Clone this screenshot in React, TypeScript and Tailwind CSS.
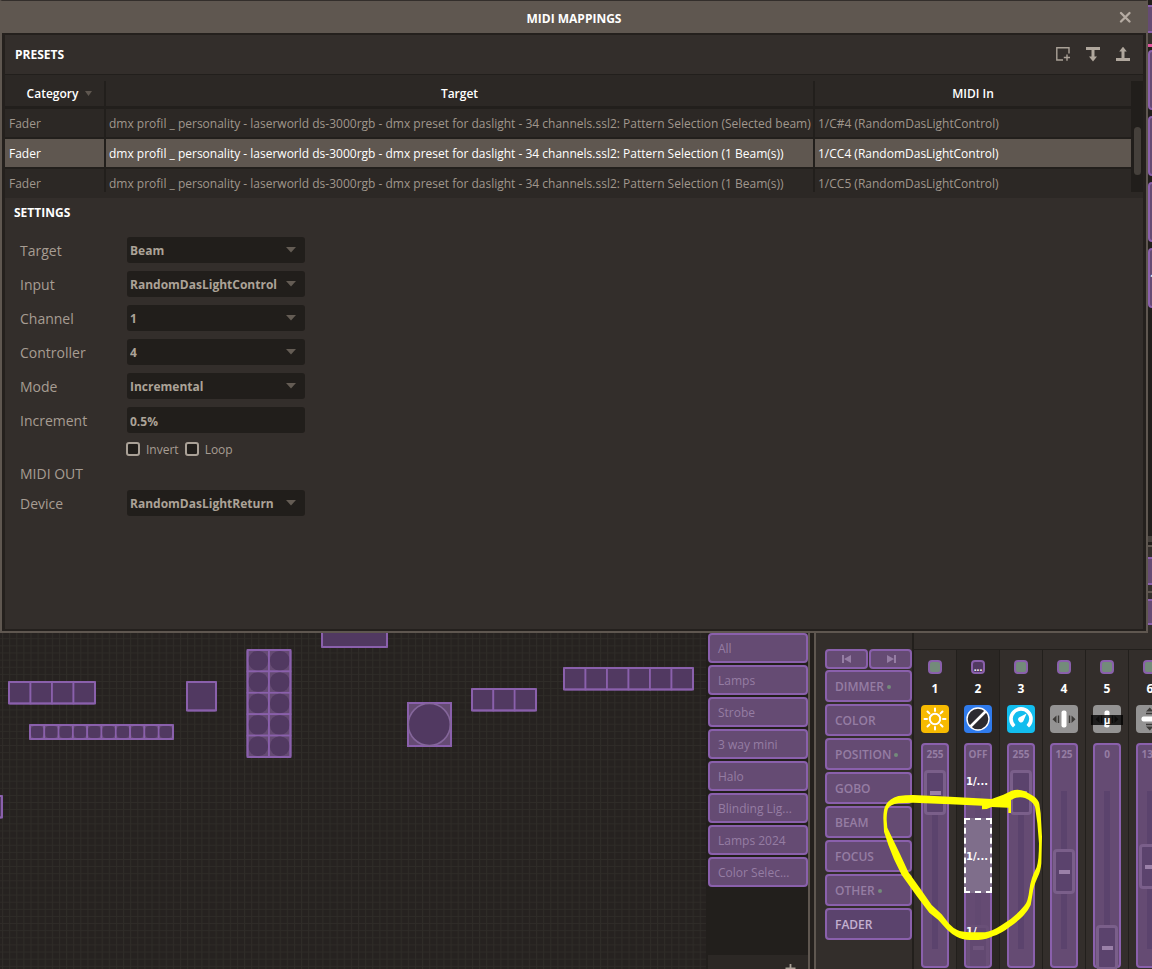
import React, { useState } from "react";
import { clsx } from "clsx";

const presets = [
  { category: "Fader", target: "dmx profil _ personality - laserworld ds-3000rgb - dmx preset for daslight - 34 channels.ssl2: Pattern Selection (Selected beam)", midi: "1/C#4 (RandomDasLightControl)" },
  { category: "Fader", target: "dmx profil _ personality - laserworld ds-3000rgb - dmx preset for daslight - 34 channels.ssl2: Pattern Selection (1 Beam(s))", midi: "1/CC4 (RandomDasLightControl)" },
  { category: "Fader", target: "dmx profil _ personality - laserworld ds-3000rgb - dmx preset for daslight - 34 channels.ssl2: Pattern Selection (1 Beam(s))", midi: "1/CC5 (RandomDasLightControl)" },
];

const groups = ["All", "Lamps", "Strobe", "3 way mini", "Halo", "Blinding Lig...", "Lamps 2024", "Color Selec..."];

const features = [
  { name: "DIMMER", dot: true },
  { name: "COLOR" },
  { name: "POSITION", dot: true },
  { name: "GOBO" },
  { name: "BEAM" },
  { name: "FOCUS" },
  { name: "OTHER", dot: true },
  { name: "FADER", active: true },
];

function Field({ id, label, children }: { id: string; label: string; children: React.ReactNode }) {
  return (
    <div className="flex h-[26px] items-center">
      <label htmlFor={id} className="w-[107px] pt-0.5 text-sm leading-5">{label}</label>
      <div className="relative w-[178px]">{children}</div>
    </div>
  );
}

function SelectField({ id, label, value }: { id: string; label: string; value: string }) {
  return (
    <Field id={id} label={label}>
      <select id={id} className="block h-[26px] w-full appearance-none rounded-[3px] bg-[#211e1b] px-[3px] pt-0.5 text-xs font-bold text-[#aca398] outline-none">
        <option>{value}</option>
      </select>
      <svg className="pointer-events-none absolute top-2.5 right-[9px] h-[6px] w-[10px]" viewBox="0 0 10 6">
        <path d="M0 0h10L5 5.500z" fill="#645c54" />
      </svg>
    </Field>
  );
}

function Check({ label }: { label: string }) {
  return (
    <label className="flex items-center gap-1.5 text-xs">
      <input type="checkbox" className="size-3.5 appearance-none rounded-[3px] border-2 border-[#aaa197] bg-[#211e1b] checked:bg-[#aaa197]" />
      <span className="pt-0.5">{label}</span>
    </label>
  );
}

function Dialog() {
  const [selected, setSelected] = useState(1);
  return (
    <section aria-label="MIDI Mappings" className="flex min-w-0 flex-1 flex-col border-x-2 border-b-2 border-[#5f5750] border-t border-t-[#332e2b]">
      <header className="relative flex h-8 items-center justify-center bg-[#5f5750]">
        <h1 className="pt-[3px] text-xs font-bold text-white">MIDI MAPPINGS</h1>
        <button aria-label="Close" className="absolute right-[15px] size-3">
          <svg viewBox="0 0 12 12" className="size-3"><path d="M2 2l8.500 8.500m0-8.500L2 10.500" stroke="#b5aba2" strokeWidth="2.300" strokeLinecap="round" /></svg>
        </button>
      </header>
      <div className="flex flex-1 flex-col border-x-[3px] border-y-2 border-[#24201d] bg-[#332e2b]">
        <div className="flex h-10 items-center justify-between border-b border-[#221f1c] pr-[13px] pl-2.5">
          <h2 className="text-xs font-bold text-white">PRESETS</h2>
          <div className="flex gap-4">
            <button aria-label="New preset">
              <svg viewBox="0 0 14 15" className="h-[15px] w-3.5" fill="none" stroke="#aaa197" strokeWidth="1.400">
                <path d="M13 6.500V.8H.8V13H7M7.800 10.500h6.200M11 7.500v6.200" />
              </svg>
            </button>
            <button aria-label="Import presets">
              <svg viewBox="0 0 14 15" className="h-[15px] w-3.5" fill="#b0a79d">
                <path d="M0 0h14v3H0zM5.500 3h3V9.500H11L7 14.500 3 9.500h2.500z" />
              </svg>
            </button>
            <button aria-label="Export presets">
              <svg viewBox="0 0 14 15" className="h-[15px] w-3.5" fill="#b0a79d">
                <path d="M0 11h14v3H0zM5.500 11V4.500H3.200L7-.3l3.800 4.800H8.500V11z" />
              </svg>
            </button>
          </div>
        </div>
        <div className="bg-[#2c2825] py-1.5">
          <div className="flex h-[111px] overflow-hidden">
            <table className="min-w-0 flex-1 table-fixed border-separate border-spacing-0 self-start text-xs">
              <colgroup>
                <col className="w-[101px]" />
                <col />
                <col className="w-[316px]" />
              </colgroup>
              <thead className="text-white">
                <tr className="h-7">
                  <th className="border-r-2 border-b-[3px] border-[#221f1c] p-0 font-semibold">
                    <span className="flex items-center justify-center gap-[7px] pl-4 pr-1.5">
                      Category
                      <svg viewBox="0 0 7 5" className="h-[5px] w-[7px]"><path d="M0 0h7L3.500 5z" fill="#5f5750" /></svg>
                    </span>
                  </th>
                  <th className="border-r-2 border-b-[3px] border-[#221f1c] p-0 font-semibold">Target</th>
                  <th className="border-b-[3px] border-[#221f1c] p-0 font-semibold">MIDI In</th>
                </tr>
              </thead>
              <tbody>
                {presets.map((p, i) => (
                  <tr key={i} onClick={() => setSelected(i)} className={clsx("h-[30px]", i === selected ? "bg-[#5f5750] text-white" : "text-[#a0978d]")}>
                    <td className="border-r-2 border-b-2 border-[#221f1c] p-0 pt-0.5 pl-1">{p.category}</td>
                    <td className="truncate border-r-2 border-b-2 border-[#221f1c] p-0 pt-0.5 pl-[3px]">{p.target}</td>
                    <td className="border-b-2 border-[#221f1c] p-0 pt-0.5 pl-[3px]">{p.midi}</td>
                  </tr>
                ))}
              </tbody>
            </table>
            <div className="flex w-3 justify-center bg-[#211e1b] pt-[46px]">
              <div className="h-12 w-[7px] rounded-full bg-[#45403b]" />
            </div>
          </div>
        </div>
        <div className="flex h-[431px] flex-col text-[#a79d93]">
          <h2 className="flex h-7 items-center pt-0.5 pl-[9px] text-xs font-bold text-white">SETTINGS</h2>
          <form className="flex flex-col gap-2 pt-[11px] pl-[15px]">
            <SelectField id="target" label="Target" value="Beam" />
            <SelectField id="input" label="Input" value="RandomDasLightControl" />
            <SelectField id="channel" label="Channel" value="1" />
            <SelectField id="controller" label="Controller" value="4" />
            <SelectField id="mode" label="Mode" value="Incremental" />
            <Field id="increment" label="Increment">
              <input id="increment" defaultValue="0.5%" className="block h-[26px] w-full rounded-[3px] bg-[#211e1b] px-[3px] pt-0.5 text-xs font-bold text-[#aca398] outline-none" />
            </Field>
            <div className="flex h-4 items-center gap-1.5 pl-[106px]">
              <Check label="Invert" />
              <Check label="Loop" />
            </div>
            <div className="-mt-px flex flex-col gap-1.5">
              <h3 className="text-sm leading-5">MIDI OUT</h3>
              <SelectField id="device" label="Device" value="RandomDasLightReturn" />
            </div>
          </form>
        </div>
      </div>
    </section>
  );
}

function EdgeStrip() {
  return (
    <aside className="flex w-1 shrink-0 flex-col overflow-hidden bg-[#211e1b] pt-[5px]">
      <div className="h-7 shrink-0 border-y-2 border-[#8a60ac] bg-[#654b73]" />
      <div className="h-[11px] shrink-0 bg-[#332e2b]" />
      <div className="mb-[3px] h-[3px] shrink-0 bg-[#e0529c]" />
      {["", "", "", "1"].map((t, i) => (
        <button key={i} aria-label="Scene" className="mb-1.5 flex h-[60px] w-8 shrink-0 items-center rounded-[4px] border-2 border-[#8a60ac] bg-[#654b73] text-[10px] font-bold text-white">{t}</button>
      ))}
      <div className="mt-[222px] h-1.5 shrink-0 bg-[#45403b]" />
      <div className="mt-[3px] h-0.5 shrink-0 bg-[#5f5750]" />
      <div className="h-2.5 shrink-0 bg-[#332e2b]" />
      <div className="h-7 shrink-0 border-y-2 border-[#8a60ac] bg-[#654b73]" />
      <div className="h-1.5 shrink-0 bg-[#332e2b]" />
      <div className="h-0.5 shrink-0 bg-[#5f5750]" />
      <div className="h-1.5 shrink-0 bg-[#332e2b]" />
      <div className="h-[26px] shrink-0 border-y-2 border-[#8a60ac] bg-[#654b73]" />
      <div className="flex-1 bg-[#332e2b]" />
    </aside>
  );
}

type CellShape = "square" | "round" | "soft";

function Fixture({ x, y, w, h, cols = 1, rows = 1, shape = "square" }: { x: number; y: number; w: number; h: number; cols?: number; rows?: number; shape?: CellShape }) {
  const cw = (w - 2) / cols;
  const ch = (h - 2) / rows;
  const cells = [];
  for (let r = 0; r < rows; r++) {
    for (let c = 0; c < cols; c++) {
      const cx = x + 1 + c * cw;
      const cy = y + 1 + r * ch;
      cells.push(
        <g key={`${r}-${c}`}>
          <rect x={cx} y={cy} width={cw} height={ch} fill={shape === "square" ? "#513961" : "#654b73"} stroke="#8a60ac" strokeWidth="1.7" />
          {shape === "round" && <rect x={cx + 1} y={cy + 1} width={cw - 2} height={ch - 2} rx={9} fill="#513961" />}
          {shape === "soft" && <rect x={cx + 1} y={cy + 1} width={cw - 2} height={ch - 2} rx={4} fill="#513961" />}
        </g>
      );
    }
  }
  return (
    <g>
      {cells}
      <rect x={x + 1} y={y + 1} width={w - 2} height={h - 2} rx="1" fill="none" stroke="#8a60ac" strokeWidth="2" />
    </g>
  );
}

function Stage() {
  return (
    <div className="min-w-0 flex-1 overflow-hidden bg-[#262220]">
      <svg className="h-full w-full" aria-label="Stage layout">
        <defs>
          <pattern id="grid" x="2" y="5.300" width="7.120" height="7.120" patternUnits="userSpaceOnUse">
            <path d="M.5 0V7.120M0 .5H7.120" stroke="#2f2c28" fill="none" />
          </pattern>
        </defs>
        <rect width="100%" height="100%" fill="url(#grid)" />
        <Fixture x={321} y={-12} w={67} h={27} />
        <Fixture x={8} y={48} w={88} h={23.500} cols={4} />
        <Fixture x={186} y={48} w={31} h={30.500} />
        <Fixture x={29} y={91} w={145} h={16} cols={10} shape="soft" />
        <Fixture x={246.500} y={16} w={45} h={109} cols={2} rows={5} shape="round" />
        <Fixture x={471} y={55} w={66} h={23.500} cols={3} />
        <Fixture x={563} y={34} w={131} h={23.500} cols={6} />
        <Fixture x={-28} y={162} w={31} h={23.500} />
        <rect x="408" y="70" width="43" height="43" fill="#654b73" stroke="#8a60ac" strokeWidth="2" />
        <circle cx="429.300" cy="91.500" r="21" fill="#513961" stroke="#84669a" strokeWidth="1.600" />
      </svg>
    </div>
  );
}

function Groups() {
  return (
    <nav aria-label="Groups" className="flex w-[104px] shrink-0 flex-col border-r-2 border-[#5f5750] bg-[#221f1c] pl-0.5">
      <div className="flex flex-1 flex-col gap-0.5">
        {groups.map((g) => (
          <button key={g} className="h-[30px] shrink-0 rounded-[4px] border-2 border-[#8a60ac] bg-[#654b73] pt-0.5 pl-2 text-left text-xs text-[#957da3]">{g}</button>
        ))}
      </div>
      <div className="flex h-[14px] shrink-0 justify-end overflow-hidden bg-[#2c2825] pt-[9px] pr-3">
        <button aria-label="Add group" className="size-[11px] shrink-0">
          <svg viewBox="0 0 11 11" className="size-[11px]"><path d="M5.500 0v10M.5 4.500h10" stroke="#aaa197" strokeWidth="1.800" /></svg>
        </button>
      </div>
    </nav>
  );
}

function Features() {
  return (
    <nav aria-label="Features" className="flex w-[98px] shrink-0 flex-col gap-0.5 border-r-2 border-[#221f1c] bg-[#332e2b] pt-4 pl-[9px]">
      <div className="-mb-px flex h-5 gap-px">
        <button aria-label="Previous" className="flex flex-1 items-center justify-center rounded-[4px] border-2 border-[#8a60ac] bg-[#654b73]">
          <svg viewBox="0 0 10 8" className="h-2 w-2.5" fill="#957da3"><path d="M0 0h2v8H0zM9 0v8L2 4z" /></svg>
        </button>
        <button aria-label="Next" className="flex flex-1 items-center justify-center rounded-[4px] border-2 border-[#8a60ac] bg-[#654b73]">
          <svg viewBox="0 0 10 8" className="h-2 w-2.5" fill="#957da3"><path d="M8 0h2v8H8zM1 0v8l7-4z" /></svg>
        </button>
      </div>
      {features.map((f) => (
        <button
          key={f.name}
          className={clsx(
            "flex h-8 shrink-0 items-center gap-[3px] rounded-[4px] border-2 border-[#8a60ac] pt-0.5 pl-2 text-xs font-semibold",
            f.active ? "bg-[#5b436d] text-[#c3b0d0]" : "bg-[#654b73] text-[#957da3]"
          )}
        >
          {f.name}
          {f.dot && <span className="size-1 rounded-full bg-[#738b7a]" />}
        </button>
      ))}
    </nav>
  );
}

function Sun() {
  return (
    <svg viewBox="0 0 28 28" className="size-7" fill="none" stroke="#fff" strokeWidth="2" strokeLinecap="round">
      <circle cx="14" cy="14" r="5.200" />
      <path d="M14 3.500V6M14 22v2.500M3.500 14H6M22 14h2.500M6.500 6.500l1.900 1.900M19.600 19.600l1.900 1.900M6.500 21.500l1.900-1.900M19.600 8.400l1.900-1.900" />
    </svg>
  );
}

function Shutter() {
  return (
    <svg viewBox="0 0 28 28" className="size-7">
      <circle cx="14" cy="14" r="11" fill="#2c2b30" stroke="#fff" strokeWidth="1.400" />
      <path d="M6.500 21.500l15-15" stroke="#fff" strokeWidth="2.600" />
    </svg>
  );
}

function Gauge() {
  return (
    <svg viewBox="0 0 28 28" className="size-7" fill="none">
      <path d="M7.200 21.200A10 10 0 1 1 20.800 21.200" stroke="#fff" strokeWidth="3.600" />
      <path d="M19.600 8.400l-3.300 7.900a2.700 2.700 0 1 1-4.400-3.700z" fill="#fff" />
    </svg>
  );
}

function Pan({ vertical }: { vertical?: boolean }) {
  return (
    <svg viewBox="0 0 28 28" className="size-7">
      <g transform={vertical ? "rotate(90 14 14)" : undefined}>
        <rect x="11.500" y="5.500" width="5" height="17" rx="2" fill="#fff" />
        <path d="M6.500 10.500v7.500L2.500 14.200zM21.500 10.500v7.500l4-3.800zM7.800 10.500h1.400v7.500H7.800zM18.800 10.500h1.400v7.500h-1.400z" fill="#3c3a38" />
      </g>
    </svg>
  );
}

const faders = [
  { n: 1, value: 255, label: "255", bg: "bg-[#f7ba00]", icon: <Sun /> },
  { n: 2, value: 0, label: "OFF", bg: "bg-[#2f7bec]", icon: <Shutter />, mapped: true },
  { n: 3, value: 255, label: "255", bg: "bg-[#12bdee]", icon: <Gauge /> },
  { n: 4, value: 125, label: "125", bg: "bg-[#949393]", icon: <Pan /> },
  { n: 5, value: 0, label: "0", bg: "bg-[#949393]", icon: <Pan />, fine: true },
  { n: 6, value: 133, label: "133", bg: "bg-[#949393]", icon: <Pan vertical /> },
];

const sliderClass =
  "h-[200px] w-[22px] shrink-0 appearance-none bg-[linear-gradient(#5b436d,#5b436d)] bg-[length:6px_158px] bg-center bg-no-repeat [direction:rtl] [writing-mode:vertical-lr] [&::-webkit-slider-thumb]:h-[45px] [&::-webkit-slider-thumb]:w-[22px] [&::-webkit-slider-thumb]:appearance-none [&::-webkit-slider-thumb]:rounded-[4px] [&::-webkit-slider-thumb]:border-[3px] [&::-webkit-slider-thumb]:border-[#7a5f8a] [&::-webkit-slider-thumb]:bg-[#5b436d] [&::-webkit-slider-thumb]:bg-[linear-gradient(#9a80a8,#9a80a8)] [&::-webkit-slider-thumb]:bg-[length:11px_4px] [&::-webkit-slider-thumb]:bg-center [&::-webkit-slider-thumb]:bg-no-repeat";

function Faders() {
  return (
    <section aria-label="Faders" className="flex w-[238px] shrink-0 flex-col overflow-hidden bg-[#332e2b] pt-4">
      <div className="flex flex-1 border-t border-[#221f1c]">
        {faders.map((f) => (
          <div key={f.n} className={clsx("flex w-[43px] shrink-0 flex-col items-center border-r border-[#221f1c] pt-2.5", f.mapped && "bg-[#2b2724]")}>
            <button
              aria-label={`Channel ${f.n} state`}
              className={clsx("flex size-3.5 items-end justify-center rounded-[4px] border-2 border-[#8a60ac] text-[10px] leading-[10px] font-bold text-white", f.mapped ? "bg-[#513961]" : "bg-[#738b7a]")}
            >
              {f.mapped && "..."}
            </button>
            <span className="mt-[5px] mb-1.5 h-5 text-xs leading-5 font-bold text-white">{f.n}</span>
            <div className={clsx("relative size-7 rounded-[4px]", f.bg)}>
              {f.icon}
              {f.fine && <span className="absolute top-2.5 -left-0.5 flex h-2.5 w-8 items-center justify-center bg-black/80 text-[10px] leading-[10px] font-bold text-white">μ</span>}
            </div>
            <div className="relative mt-2.5 flex h-[225px] w-7 flex-col items-center rounded-[4px] border-2 border-[#8a60ac] bg-[#654b73]">
              <span className="mb-[7px] h-[18px] text-[10px] leading-[18px] font-bold text-[#957da3]">{f.label}</span>
              <input type="range" aria-label={`Channel ${f.n}`} min={0} max={255} defaultValue={f.value} className={clsx(sliderClass, f.mapped && "opacity-20")} />
              {f.mapped && (
                <div className="absolute -inset-0.5 grid grid-rows-3 font-['DejaVu_Sans'] text-[10px] font-bold text-white">
                  <button className="pt-0.5 pr-0.5">1/...</button>
                  <button className="border-2 border-dashed border-white bg-[#7f6e8b] pt-0.5 pr-0.5"><span className="-mx-1">1/...</span></button>
                  <button className="pt-0.5 pr-0.5">1/...</button>
                </div>
              )}
            </div>
          </div>
        ))}
      </div>
    </section>
  );
}

function Annotation() {
  return (
    <svg className="pointer-events-none absolute top-[147px] right-0 h-[189px] w-[282px]" viewBox="0 0 846 567" aria-hidden="true">
      <path
        fill="#ffff00"
        fillRule="evenodd"
        d="M40 115Q40 85 48 74Q58 56 85 48Q105 45 130 45L240 50L365 57L400 44L425 32Q445 25 465 34L490 48Q505 58 508 72L512 100L516 170L514 250Q512 275 503 292Q490 320 488 340L482 375Q476 390 460 407Q440 427 420 440Q395 460 370 468Q350 479 325 480H300Q275 478 260 470Q245 463 230 448L205 420L178 398L140 348L95 285L72 238L55 195L42 155ZM50 120Q50 98 54 86Q60 74 85 70Q105 68 130 68L240 73L336 77V88L350 87L365 81L415 83V99H423V60Q445 47 465 54Q488 64 495 80L502 130L507 190Q507 240 500 262Q482 295 478 330Q474 365 464 376Q435 412 395 435Q365 455 345 457H300Q275 456 262 450Q250 445 238 432L215 403L185 375L150 325L115 276L90 222L65 170L52 143Z"
      />
    </svg>
  );
}

export default function App() {
  return (
    <main className="flex h-screen min-h-[633px] flex-col overflow-hidden bg-[#262220] font-['Open_Sans','Noto_Sans',sans-serif]">
      <div className="flex shrink-0">
        <Dialog />
        <EdgeStrip />
      </div>
      <div className="relative flex min-h-0 flex-1 overflow-hidden">
        <Stage />
        <Groups />
        <div className="w-1 shrink-0 bg-[#24201d]" />
        <div className="w-0.5 shrink-0 bg-[#5f5750]" />
        <Features />
        <Faders />
        <Annotation />
      </div>
    </main>
  );
}
